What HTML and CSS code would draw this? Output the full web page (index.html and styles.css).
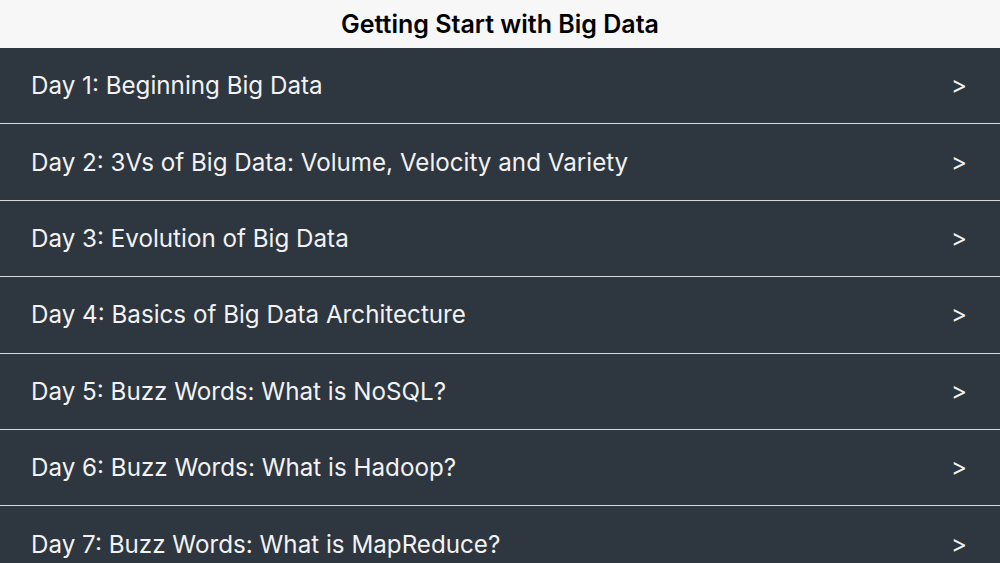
FILE: index.html
```html
<!DOCTYPE html>
<html lang="en">
<head>
  <meta charset="UTF-8">
  <meta name="viewport" content="width=device-width, initial-scale=1.0">
  <title>Getting Start with Big Data</title>
  <link rel="stylesheet" href="styles.css">
</head>
<body>
  <div class="nav-bar">
    <h1>Getting Start with Big Data</h1>
  </div>
  <ul class="day-list">
    <li><span>Day 1: Beginning Big Data</span><span class="arrow">&gt;</span></li>
    <li><span>Day 2: 3Vs of Big Data: Volume, Velocity and Variety</span><span class="arrow">&gt;</span></li>
    <li><span>Day 3: Evolution of Big Data</span><span class="arrow">&gt;</span></li>
    <li><span>Day 4: Basics of Big Data Architecture</span><span class="arrow">&gt;</span></li>
    <li><span>Day 5: Buzz Words: What is NoSQL?</span><span class="arrow">&gt;</span></li>
    <li><span>Day 6: Buzz Words: What is Hadoop?</span><span class="arrow">&gt;</span></li>
    <li><span>Day 7: Buzz Words: What is MapReduce?</span><span class="arrow">&gt;</span></li>
  </ul>
</body>
</html>
```
FILE: styles.css
```css
*{
  box-sizing: border-box;
}

body{
  margin: 0;
  background: #2e3640;
  font-family: Inter, "Liberation Sans", sans-serif;
  overflow: hidden;
}

.nav-bar{
  height: 48px;
  background: #f7f7f7;
  display: flex;
  align-items: center;
  justify-content: center;
}

.nav-bar h1{
  margin: 0;
  font-size: 25px;
  font-weight: 600;
  color: #000;
}

.day-list{
  margin: 0;
  padding: 0;
  list-style: none;
}

.day-list li{
  height: 76.4px;
  padding: 0 33px 0 31px;
  display: flex;
  align-items: center;
  justify-content: space-between;
  color: #f2f2f2;
  font-size: 24.2px;
  border-bottom: 1.5px solid #d6d8da;
}
```
